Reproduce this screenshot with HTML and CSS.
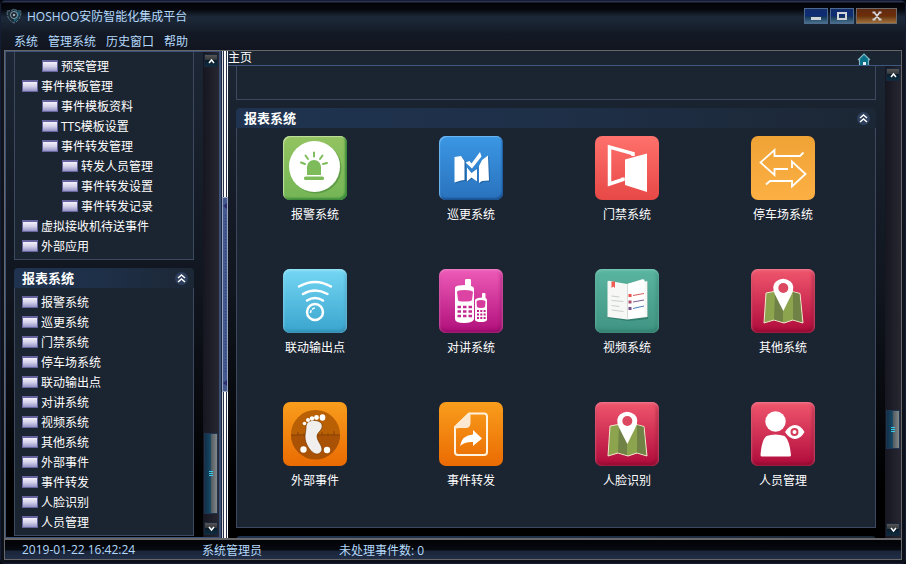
FILE: index.html
```html
<!DOCTYPE html>
<html lang="zh-CN">
<head>
  <meta charset="UTF-8">
  <title>HOSHOO安防智能化集成平台</title>
  <meta name="viewport" content="width=device-width, initial-scale=1.0">
  <link rel="stylesheet" href="styles.css">
</head>
<body>
  <div class="window">
    <!-- Title bar -->
    <header class="titlebar">
      <svg class="app-icon" width="16" height="16" viewBox="0 0 16 16">
        <path d="M1 3Q5 3 8 1Q11 3 15 3Q15 12 8 15Q1 12 1 3Z" fill="#1c303c" stroke="#60798a" stroke-dasharray="3 1"/>
        <path d="M8 2Q11 4 14 4Q13 11 8 14Z" fill="#176078"/>
        <circle cx="8" cy="7" r="3.5" fill="#18242f" stroke="#8b9ba5"/>
        <circle cx="8" cy="7" r="1.3" fill="#9cacb4"/>
      </svg>
      <h1>HOSHOO安防智能化集成平台</h1>
      <div class="window-buttons">
        <button type="button" class="win-btn" aria-label="最小化">
          <svg width="12" height="10" viewBox="0 0 12 10"><path d="M1 6h10v3H1z" fill="#d0d4da"/></svg>
        </button>
        <button type="button" class="win-btn" aria-label="最大化">
          <svg width="12" height="10" viewBox="0 0 12 10"><path d="M2 2h8v6H2z" fill="none" stroke="#d0d4da" stroke-width="2"/></svg>
        </button>
        <button type="button" class="win-btn close" aria-label="关闭">
          <svg width="12" height="10" viewBox="0 0 12 10"><path d="M3 1l6 8M9 1L3 9M1.500 1.500h3M7.500 1.500h3M1.500 8.500h3M7.500 8.500h3" fill="none" stroke="#d0d4da" stroke-width="1.800"/></svg>
        </button>
      </div>
    </header>

    <nav class="menubar">
      <a href="#">系统</a>
      <a href="#">管理系统</a>
      <a href="#">历史窗口</a>
      <a href="#">帮助</a>
    </nav>

    <div class="workspace">
      <!-- Sidebar -->
      <aside class="sidebar">
        <div class="sidebar-list">
          <ul class="panel tree">
            <li class="level-2"><a href="#">预案管理</a></li>
            <li><a href="#">事件模板管理</a></li>
            <li class="level-2"><a href="#">事件模板资料</a></li>
            <li class="level-2"><a href="#">TTS模板设置</a></li>
            <li class="level-2"><a href="#">事件转发管理</a></li>
            <li class="level-3"><a href="#">转发人员管理</a></li>
            <li class="level-3"><a href="#">事件转发设置</a></li>
            <li class="level-3"><a href="#">事件转发记录</a></li>
            <li><a href="#">虚拟接收机待送事件</a></li>
            <li><a href="#">外部应用</a></li>
          </ul>
          <section>
            <div class="panel-title">
              <h2>报表系统</h2>
              <button type="button" class="collapse" aria-label="收起">
                <svg width="13" height="13" viewBox="0 0 13 13"><circle cx="6.500" cy="6.500" r="6.500" fill="#2d3f5c"/><path d="M3 6l3.500-3L10 6M3 10l3.500-3L10 10" fill="none" stroke="#fff" stroke-width="1.500"/></svg>
              </button>
            </div>
            <ul class="panel tree">
              <li><a href="#">报警系统</a></li>
              <li><a href="#">巡更系统</a></li>
              <li><a href="#">门禁系统</a></li>
              <li><a href="#">停车场系统</a></li>
              <li><a href="#">联动输出点</a></li>
              <li><a href="#">对讲系统</a></li>
              <li><a href="#">视频系统</a></li>
              <li><a href="#">其他系统</a></li>
              <li><a href="#">外部事件</a></li>
              <li><a href="#">事件转发</a></li>
              <li><a href="#">人脸识别</a></li>
              <li><a href="#">人员管理</a></li>
            </ul>
          </section>
        </div>
        <div class="scrollbar">
          <button type="button" class="scroll-btn" aria-label="向上滚动">
            <svg width="7" height="6" viewBox="0 0 7 6"><path d="M1 5l2.500-3L6 5" fill="none" stroke="#fff" stroke-width="1.500"/></svg>
          </button>
          <div class="track before"></div>
          <div class="thumb long"></div>
          <div class="track after-low"></div>
          <button type="button" class="scroll-btn" aria-label="向下滚动">
            <svg width="7" height="6" viewBox="0 0 7 6"><path d="M1 1l2.500 3L6 1" fill="none" stroke="#fff" stroke-width="1.500"/></svg>
          </button>
        </div>
      </aside>

      <div class="splitter">
        <div class="splitter-grip">
          <svg width="4" height="6" viewBox="0 0 4 6"><path d="M4 0v6L0 3z" fill="#2b2c6b"/></svg>
          <div class="grip-dots"></div>
          <svg width="4" height="6" viewBox="0 0 4 6"><path d="M4 0v6L0 3z" fill="#2b2c6b"/></svg>
        </div>
      </div>

      <!-- Main area -->
      <main class="main">
        <div class="tabstrip">
          <span>主页</span>
          <a href="#" class="home" aria-label="主页">
            <svg width="14" height="13" viewBox="0 0 14 13"><path d="M2 13V7L7 2l5 5v6z" fill="#087088"/><path d="M1 8l6-6 6 6M2.500 7v6M11.500 7v6" fill="none" stroke="#7fb6c2" stroke-width="1.200"/><path d="M6 10h3v3H6z" fill="#e6f0f0"/></svg>
          </a>
        </div>
        <div class="page">
          <div class="page-content">
            <section class="panel empty"></section>
            <section>
              <div class="panel-title">
                <h2>报表系统</h2>
                <button type="button" class="collapse" aria-label="收起">
                  <svg width="13" height="13" viewBox="0 0 13 13"><circle cx="6.500" cy="6.500" r="6.500" fill="#2d3f5c"/><path d="M3 6l3.500-3L10 6M3 10l3.500-3L10 10" fill="none" stroke="#fff" stroke-width="1.500"/></svg>
                </button>
              </div>
              <div class="panel tiles">
                <a href="#" class="tile">
                  <span class="icon green">
                    <svg viewBox="0 0 64 64">
                      <circle cx="33" cy="32" r="25.500" fill="#4c8a3c" opacity=".6"/>
                      <circle cx="31.500" cy="30.500" r="25.500" fill="#fff"/>
                      <path d="M24 39V31a7 7 0 0 1 14 0v8z" fill="#7dbb5b"/>
                      <rect x="21" y="40.500" width="20" height="3.500" rx="1.500" fill="#7dbb5b"/>
                      <path d="M31 16.500v4M22.500 19.500l2.500 3.500M39.500 19.500L37 23M18 26.500l4 1.500M44 27l-4 1" stroke="#7dbb5b" stroke-width="2" stroke-linecap="round"/>
                    </svg>
                  </span>
                  <span>报警系统</span>
                </a>
                <a href="#" class="tile">
                  <span class="icon blue">
                    <svg viewBox="0 0 64 64">
                      <path d="M16.500 22l6.500-1 4 5v19l-4 .5-6.500 2zM29 32.500l4.500 5.500 5-6V46.500l-5-4-5.500 4zM41 31l3-6 6-4.500 1 25-7 .5-3 2z" fill="#17548f" opacity=".6"/>
                      <path d="M15.500 21l6.500-1 3.500 5v19l-3.500.5-6.500 2z" fill="#fff"/>
                      <path d="M26.500 26.500l4-1.500 2 2.500 8.500-11.500 1.500 4.500-9.500 12z" fill="#fff"/>
                      <path d="M28 31.500l4.500 5.500 5.500-4V45.500l-5.500-4-4.500 4z" fill="#fff"/>
                      <path d="M40 30l3-6 6-4.500 1 25-7 .5-3 2z" fill="#fff"/>
                    </svg>
                  </span>
                  <span>巡更系统</span>
                </a>
                <a href="#" class="tile">
                  <span class="icon red">
                    <svg viewBox="0 0 64 64">
                      <path d="M38 20v-2.500L14.500 11v37L28 43.500v-2" fill="none" stroke="#fff" stroke-width="3.500"/>
                      <path d="M30 23.500L52 17.500V56L30 49z" fill="#fff"/>
                    </svg>
                  </span>
                  <span>门禁系统</span>
                </a>
                <a href="#" class="tile">
                  <span class="icon amber">
                    <svg viewBox="0 0 64 64">
                      <path d="M52.500 16.500L49 20H23.500V14L9.500 26.500l14 12.500v-6H37M15 48.500l4-3.500h22v5.500L54.500 38 41 25.500V32" fill="none" stroke="#fff" stroke-width="1.800"/>
                    </svg>
                  </span>
                  <span>停车场系统</span>
                </a>

                <a href="#" class="tile">
                  <span class="icon sky">
                    <svg viewBox="0 0 64 64">
                      <path d="M16 17.500q16-9 32 0M20 25q12-7 24.500 0M24 31.500q8-5 16 0" fill="none" stroke="#fff" stroke-width="2.500" stroke-linecap="round"/>
                      <circle cx="32" cy="43" r="8" fill="none" stroke="#fff" stroke-width="2.500"/>
                      <path d="M27.500 44a5 5 0 0 1 5-5" fill="none" stroke="#fff" stroke-width="1.500" stroke-dasharray="3 1"/>
                    </svg>
                  </span>
                  <span>联动输出点</span>
                </a>
                <a href="#" class="tile">
                  <span class="icon pink">
                    <svg viewBox="0 0 64 64">
                      <path d="M16 19q0-2 4-2.500l6-.5V11q0-1 1.500-1h3q1.500 0 1.500 1v6q3 .5 3 3V50q-1 4-10 4T16 50z" fill="#fff"/>
                      <path d="M18 23q0-2 7.500-2T34 23l-1 8q-1 1.500-7.500 1.500T19 31z" fill="#dc43a3"/>
                      <path d="M18.500 38H34M18.500 42.500H34M18.500 47H34" stroke="#c42a90" stroke-width="2.500" stroke-dasharray="3.500 2"/>
                      <path d="M36 31q0-1 3-2l4-.5V25q0-1 1-1h1.500q1 0 1 1v4q1.500.5 1.500 2V51q-1 2-6 2t-6-2z" fill="#fff"/>
                      <path d="M37.500 33q0-2 4.500-2t4.500 2l-.5 5q-1 1-4 1t-4-1z" fill="#d53a9c"/>
                      <path d="M38 42h9M38 45.500h9M38 49h9" stroke="#bd1e86" stroke-width="1.800" stroke-dasharray="2 1.300"/>
                    </svg>
                  </span>
                  <span>对讲系统</span>
                </a>
                <a href="#" class="tile">
                  <span class="icon teal">
                    <svg viewBox="0 0 64 64">
                      <path d="M13 14l19 3 21-5v38l-20 2-20-3z" fill="#276c5d" opacity=".6"/>
                      <path d="M12.500 12.500q1-1 2.500-.5l17 3 16-5 1.500 2.500 3-.5V48l-20 2.500-20-2.500z" fill="#f7f7f5"/>
                      <path d="M32.500 15v35l17-3.500V10.500z" fill="#fff"/>
                      <path d="M32.500 15v35" stroke="#d7dbd8"/>
                      <path d="M16.500 12.500h3.500V19l-1.700-1.500L16.500 19z" fill="#ee5b52"/>
                      <path d="M16.500 27l8 1M16.500 31.500l12 1M16.500 36.500l8 1M16.500 41l12 1.500" stroke="#c9cfcc"/>
                      <path d="M33.500 25h3v3h-3z" fill="#eb5148"/><path d="M33.500 31.500h3v3h-3z" fill="#a94e6e"/><path d="M33.500 38h3v3h-3z" fill="#74518b"/>
                      <path d="M38 26.500l11-2" stroke="#d75a58"/><path d="M38 33l11-2" stroke="#765c96"/><path d="M38 39.500l11-2.500" stroke="#4b7eb9"/>
                    </svg>
                  </span>
                  <span>视频系统</span>
                </a>
                <a href="#" class="tile">
                  <span class="icon crimson">
                    <svg viewBox="0 0 64 64">
                      <g id="map-pin">
                        <path d="M15 24l8-1.500 9 1.500 9-1.500 8 2L52 54l-10-3-9 3-10-3-10 3z" fill="#8da44f" stroke="#f0e8cf"/>
                        <path d="M24 23l8 1v29l-9-2.500zM42 23l6.500 2L51 53l-9-2.500z" fill="#718247"/>
                        <path d="M32.300 42L24 25.500Q20 17 25 12.500q7-5.500 14.500 0 5 4.500 1 13z" fill="#fff"/>
                        <circle cx="32.300" cy="19" r="5" fill="#dc4860"/>
                      </g>
                    </svg>
                  </span>
                  <span>其他系统</span>
                </a>

                <a href="#" class="tile">
                  <span class="icon orange">
                    <svg viewBox="0 0 64 64">
                      <circle cx="32.500" cy="32.500" r="24.500" fill="#b96005"/>
                      <path d="M8 33a24.500 24.500 0 0 0 49 0z" fill="#a95104"/>
                      <path d="M8 33h49M15 30v3M21 31v2M39 30v3M45 31v2M51 29v4" stroke="#854006"/>
                      <path d="M23 25c0-5 4-7 9-6.500 5 .5 8 3 7 7-1 4-5 5-5 9s5 9 5 12.500c0 3-3 5.500-6 5-5-1-11-10-11-17 0-4 1-6 1-10z" fill="#f1efed" stroke="#783900" stroke-width=".7"/>
                      <circle cx="21.500" cy="21.500" r="1.800" fill="#fff"/><circle cx="25" cy="18" r="2" fill="#fff"/><circle cx="29" cy="16.500" r="2.200" fill="#fff"/><circle cx="33.500" cy="15.500" r="2.400" fill="#fff"/><ellipse cx="39.500" cy="15.500" rx="2.800" ry="3.300" fill="#fff"/>
                      <circle cx="20.500" cy="47.500" r="3.200" fill="#fff"/><circle cx="44" cy="48" r="3.200" fill="#fff"/>
                    </svg>
                  </span>
                  <span>外部事件</span>
                </a>
                <a href="#" class="tile">
                  <span class="icon orange">
                    <svg viewBox="0 0 64 64">
                      <path d="M30 11.500h15q3 0 3 3V50q0 3-3 3H19q-3 0-3-3V25z" fill="none" stroke="#fff2df" stroke-width="2"/>
                      <path d="M15.500 25L30 11.500q2 0 1.500 2.500v7q0 5-5 5h-6q-4 0-5 2z" fill="#fce8d0"/>
                      <path d="M21 44q2-11 13-11.500V28l9 8.500-9 7.500v-4q-8-.5-13 4z" fill="#fff"/>
                    </svg>
                  </span>
                  <span>事件转发</span>
                </a>
                <a href="#" class="tile">
                  <span class="icon crimson">
                    <svg viewBox="0 0 64 64"><use href="#map-pin"/></svg>
                  </span>
                  <span>人脸识别</span>
                </a>
                <a href="#" class="tile">
                  <span class="icon crimson">
                    <svg viewBox="0 0 64 64">
                      <circle cx="24.500" cy="19.500" r="10.200" fill="#fff"/>
                      <path d="M9.500 53q1-15 6-19 4-1.500 9-1.500t9 1.500q5 4 6.500 19 0 1.500-1.500 1.500H11q-1.500 0-1.500-1.500z" fill="#fff"/>
                      <path d="M34 30q4.500-7 10-7t9.500 7q-4 7-9.500 7t-10-7z" fill="#fff"/>
                      <circle cx="43.500" cy="30" r="3" fill="none" stroke="#d53c58" stroke-width="2"/>
                    </svg>
                  </span>
                  <span>人员管理</span>
                </a>
              </div>
            </section>
            <div class="panel-title"></div>
          </div>
          <div class="scrollbar">
            <button type="button" class="scroll-btn" aria-label="向上滚动">
              <svg width="7" height="6" viewBox="0 0 7 6"><path d="M1 5l2.500-3L6 5" fill="none" stroke="#fff" stroke-width="1.500"/></svg>
            </button>
            <div class="track before"></div>
            <div class="thumb"></div>
            <div class="track after-mid"></div>
            <button type="button" class="scroll-btn" aria-label="向下滚动">
              <svg width="7" height="6" viewBox="0 0 7 6"><path d="M1 1l2.500 3L6 1" fill="none" stroke="#fff" stroke-width="1.500"/></svg>
            </button>
          </div>
        </div>
      </main>
    </div>

    <footer class="statusbar">
      <span class="status-time">2019-01-22 16:42:24</span>
      <span class="status-user">系统管理员</span>
      <span>未处理事件数: 0</span>
    </footer>
  </div>
</body>
</html>
```

FILE: styles.css
```css
*, *::before, *::after {
  box-sizing: border-box;
}
body {
  margin: 0;
  background: #05070b;
  font-family: "Open Sans", "Noto Sans CJK SC", sans-serif;
  font-size: 12px;
  color: #fff;
}
a {
  color: inherit;
  text-decoration: none;
}
button {
  border: none;
  padding: 0;
  background: none;
  cursor: pointer;
}
svg {
  display: block;
}
h1, h2, ul {
  margin: 0;
  padding: 0;
}
ul {
  list-style: none;
}
.window {
  display: flex;
  flex-direction: column;
  height: 100vh;
  padding: 0 3px 3px;
  border: 1px solid #141d33;
  border-radius: 5px;
  background: linear-gradient(#2b3350 0, #2b3350 1px, #020307 2px, #04070c 8px, #1c2838 16px, #1b2635 20px, #131a25 32px, #11151f 50px, #0b1019 100%);
  overflow: hidden;
}

/* Title bar */
.titlebar {
  display: flex;
  align-items: center;
  height: 30px;
  padding: 0 5px 0 2px;
}
.app-icon {
  margin-right: 5px;
}
.titlebar h1 {
  flex: 1;
  font-size: 12px;
  font-weight: normal;
  color: #b5d9fb;
}
.window-buttons {
  display: flex;
  gap: 2px;
}
.win-btn {
  display: flex;
  align-items: center;
  justify-content: center;
  width: 24px;
  height: 16px;
  border: 1px solid #4d6a8c;
  background: linear-gradient(#122d6c, #0e2c77 50%, #163659 55%, #47708c);
}
.win-btn.close {
  width: 41px;
  border-color: #6e6a69;
  background: linear-gradient(#5c2a12, #702d08 50%, #6a3810 55%, #a2713d);
}
.menubar {
  display: flex;
  align-items: center;
  gap: 10px;
  height: 19px;
  padding: 0 10px;
  color: #b5d9fb;
}

/* Workspace */
.workspace {
  flex: 1;
  display: flex;
  min-height: 0;
  border: 1px solid #67676a;
  border-bottom-width: 2px;
  background: linear-gradient(#1c2634, #10151e 50%, #000 90%);
}
.sidebar {
  display: flex;
  width: 216px;
  border: 1px solid #3b5276;
  border-right-width: 2px;
}
.sidebar-list {
  flex: 1;
  display: flex;
  flex-direction: column;
  gap: 8px;
  padding: 0 9px 0 8px;
  overflow: hidden;
}
.sidebar-list > * {
  flex-shrink: 0;
}
.panel {
  border: 1px solid #3d4960;
  border-top: none;
  background: #1b2431;
}
.panel-title {
  display: flex;
  align-items: center;
  justify-content: space-between;
  height: 20px;
  padding: 0 6px 0 8px;
  border-radius: 4px 4px 0 0;
  background: linear-gradient(90deg, #1f3350, #1e2f47 50%, #1c2735);
}
.panel-title h2 {
  font-size: 13px;
  line-height: 20px;
}
.tree {
  padding: 4px 0 3px 7px;
}
.tree a {
  display: flex;
  align-items: center;
  gap: 3px;
  height: 20px;
  white-space: nowrap;
}
.tree a::before {
  content: "";
  width: 16px;
  height: 12px;
  border: 1px solid #6765a0;
  border-top-width: 2px;
  background: linear-gradient(#f4f2fc, #d2cfe9 50%, #9693c6);
}
.tree .level-2 {
  padding-left: 20px;
}
.tree .level-3 {
  padding-left: 40px;
}

/* Scrollbars */
.scrollbar {
  display: flex;
  flex-direction: column;
  width: 16px;
  padding: 2px 1px;
  background: linear-gradient(90deg, #15161f, #262730);
}
.scroll-btn {
  display: flex;
  align-items: center;
  justify-content: center;
  height: 13px;
  border: 1px solid #17263a;
  background: linear-gradient(#555, #33383c 45%, #0a1d2b 50%, #0c2d3f);
}
.before {
  flex: 1;
}
.after-low {
  height: 8px;
}
.after-mid {
  height: 74px;
}
.thumb {
  display: flex;
  align-items: center;
  justify-content: center;
  height: 39px;
  border: 1px solid #1e3450;
  background: linear-gradient(90deg, #113047, #164764 45%, #4e5a60 50%, #85888a);
}
.thumb.long {
  height: 81px;
}
.thumb::after {
  content: "";
  width: 4px;
  height: 5px;
  background: repeating-linear-gradient(#36cbe8 0, #36cbe8 1px, transparent 1px, transparent 2px);
}

.splitter {
  display: flex;
  flex-direction: column;
  justify-content: center;
  width: 7px;
  padding-left: 1px;
  background: linear-gradient(90deg, #1a2845 0, #1a2845 1px, #d8d8d8 1px, #d8d8d8 2px, #26314a 2px, #26314a 3px, #fff 3px, #fff 5px, #26314a 5px, #26314a 6px, #fff 6px);
}
.splitter-grip {
  display: flex;
  flex-direction: column;
  align-items: center;
  gap: 6px;
  height: 40%;
  padding: 5px 0;
  border: 1px solid #9aa5bd;
  background: #44598d;
}
.grip-dots {
  flex: 1;
  width: 1px;
  background: repeating-linear-gradient(#2f3a78 0, #2f3a78 1px, transparent 1px, transparent 3px);
}

/* Main area */
.main {
  flex: 1;
  display: flex;
  flex-direction: column;
  min-width: 0;
}
.tabstrip {
  display: flex;
  justify-content: space-between;
  align-items: center;
  height: 15px;
  padding-right: 30px;
  border-bottom: 1px solid #3f587f;
  line-height: 14px;
  background: #1b2431;
}
.page {
  flex: 1;
  display: flex;
  min-height: 0;
}
.page-content {
  flex: 1;
  display: flex;
  flex-direction: column;
  gap: 8px;
  padding: 0 9px 0 8px;
  overflow: hidden;
}
.page-content > * {
  flex-shrink: 0;
}
.empty {
  height: 34px;
}
.tiles {
  display: grid;
  grid-template-columns: repeat(auto-fill, 156px);
  row-gap: 44px;
  padding: 8px 0 36px;
}
.tile {
  display: flex;
  flex-direction: column;
  align-items: center;
  gap: 5px;
  line-height: 20px;
}
.icon {
  width: 64px;
  height: 64px;
  border-radius: 7px;
  overflow: hidden;
}
.icon.green {
  background: linear-gradient(#93c360, #74b556);
  box-shadow: inset 1px 1px 1px #c4e0a0, inset -2px -2px 2px #3c8a3c;
}
.icon.blue {
  background: linear-gradient(#3b97e4, #2a72bd);
  box-shadow: inset 1px 1px 1px #6fb9f2, inset -1px -2px 2px #1b5193;
}
.icon.red {
  background: linear-gradient(#ff716c, #e74846);
}
.icon.amber {
  background: linear-gradient(#f0a335, #fcb044);
}
.icon.sky {
  background: linear-gradient(#74d6f3, #3aa4cd);
  box-shadow: inset 0 1px 3px #a8eafa, inset -1px -2px 3px #2c83a8;
}
.icon.pink {
  background: linear-gradient(#ee5bb7, #b00f7b);
  box-shadow: inset 0 1px 3px #f68bd0, inset -1px -2px 4px #850a5c;
}
.icon.teal {
  background: linear-gradient(#5ab5a0, #3f9482);
  box-shadow: inset 0 1px 3px #82cfbd, inset -1px -2px 4px #2d7566;
}
.icon.crimson {
  background: linear-gradient(#f0566d, #b00b3c);
  box-shadow: inset 0 1px 3px #f88496, inset -1px -2px 4px #820a2c;
}
.icon.orange {
  background: linear-gradient(#f99d1c, #ea6b02);
}

/* Status bar */
.statusbar {
  display: flex;
  align-items: center;
  height: 20px;
  padding: 0 17px;
  border: 1px solid #67676a;
  border-top: none;
  background: linear-gradient(#020306, #06090f 50%, #1a2539 60%, #212e47);
  color: #b5d9fb;
}
.status-time {
  width: 180px;
}
.status-user {
  width: 137px;
}
```
